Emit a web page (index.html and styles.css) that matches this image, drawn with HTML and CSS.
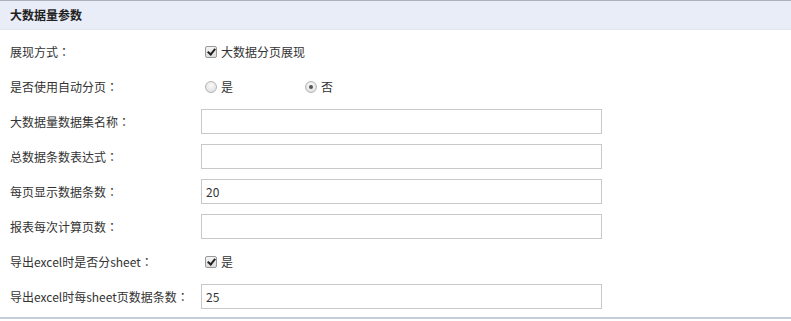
FILE: index.html
```html
<!DOCTYPE html>
<html lang="zh-CN">
<head>
    <meta charset="UTF-8">
    <title>大数据量参数</title>
    <link rel="stylesheet" href="styles.css">
</head>
<body>
    <div class="panel">
        <div class="panel-title">大数据量参数</div>
        <div class="panel-body">
            <div class="row">
                <label class="row-label">展现方式<span class="colon">：</span></label>
                <div class="row-value">
                    <span class="check checked"></span>
                    <span class="opt-text">大数据分页展现</span>
                </div>
            </div>
            <div class="row">
                <label class="row-label">是否使用自动分页<span class="colon">：</span></label>
                <div class="row-value">
                    <span class="radio-item">
                        <span class="radio"></span>
                        <span class="opt-text">是</span>
                    </span>
                    <span class="radio-item">
                        <span class="radio checked"></span>
                        <span class="opt-text">否</span>
                    </span>
                </div>
            </div>
            <div class="row">
                <label class="row-label">大数据量数据集名称<span class="colon">：</span></label>
                <div class="row-value"><input class="text-input" type="text" value=""></div>
            </div>
            <div class="row">
                <label class="row-label">总数据条数表达式<span class="colon">：</span></label>
                <div class="row-value"><input class="text-input" type="text" value=""></div>
            </div>
            <div class="row">
                <label class="row-label">每页显示数据条数<span class="colon">：</span></label>
                <div class="row-value"><input class="text-input" type="text" value="20"></div>
            </div>
            <div class="row">
                <label class="row-label">报表每次计算页数<span class="colon">：</span></label>
                <div class="row-value"><input class="text-input" type="text" value=""></div>
            </div>
            <div class="row">
                <label class="row-label">导出excel时是否分sheet<span class="colon">：</span></label>
                <div class="row-value">
                    <span class="check checked"></span>
                    <span class="opt-text">是</span>
                </div>
            </div>
            <div class="row">
                <label class="row-label">导出excel时每sheet页数据条数<span class="colon">：</span></label>
                <div class="row-value"><input class="text-input" type="text" value="25"></div>
            </div>
        </div>
    </div>
</body>
</html>
```

FILE: styles.css
```css
body {
    margin: 0;
    padding: 0;
    background: #fff;
    font-family: "Noto Sans CJK SC", "Liberation Sans", sans-serif;
    font-size: 12px;
    color: #333;
}
.panel {
    width: 791px;
    border-top: 1px solid #a9b1bf;
    border-bottom: 2px solid #c3cedb;
}
.panel-title {
    height: 28px;
    line-height: 28px;
    padding-left: 10px;
    background: #e8edf8;
    border-bottom: 1px solid #dfe5f1;
    font-weight: bold;
    color: #222;
}
.panel-body {
    padding: 4px 0 3px 0;
}
.row {
    display: flex;
    align-items: center;
    height: 35px;
}
.row-label {
    width: 191px;
    padding-left: 10px;
    white-space: nowrap;
}
/* full-width colon centred in its box, like the original font */
.colon {
    display: inline-block;
    width: 12px;
    text-align: center;
    font-family: "Noto Sans CJK JP", sans-serif;
}
.row-value {
    display: flex;
    align-items: center;
}
.text-input {
    box-sizing: border-box;
    width: 401px;
    height: 25px;
    margin: 0;
    padding: 0 4px;
    border: 1px solid #c8c8c8;
    font-family: inherit;
    font-size: 12px;
    color: #333;
    outline: none;
}
.check {
    box-sizing: border-box;
    width: 12px;
    height: 12px;
    margin-left: 4px;
    margin-right: 4px;
    border: 1px solid #999;
    border-radius: 2px;
    background: linear-gradient(#f4f4f4, #dcdcdc);
    position: relative;
}
.check.checked::after {
    content: "";
    position: absolute;
    left: 3px;
    top: 0px;
    width: 3px;
    height: 6px;
    border: solid #222;
    border-width: 0 2px 2px 0;
    transform: rotate(40deg);
}
.radio-item {
    display: flex;
    align-items: center;
    width: 100px;
}
.radio {
    box-sizing: border-box;
    width: 12px;
    height: 12px;
    margin-left: 4px;
    margin-right: 4px;
    border: 1px solid #b4b4b4;
    border-radius: 50%;
    background: radial-gradient(circle at 50% 35%, #fafafa, #dadada);
    position: relative;
}
.radio.checked::after {
    content: "";
    position: absolute;
    left: 3px;
    top: 3px;
    width: 4px;
    height: 4px;
    border-radius: 50%;
    background: #555;
}
.opt-text {
    white-space: nowrap;
}
```
